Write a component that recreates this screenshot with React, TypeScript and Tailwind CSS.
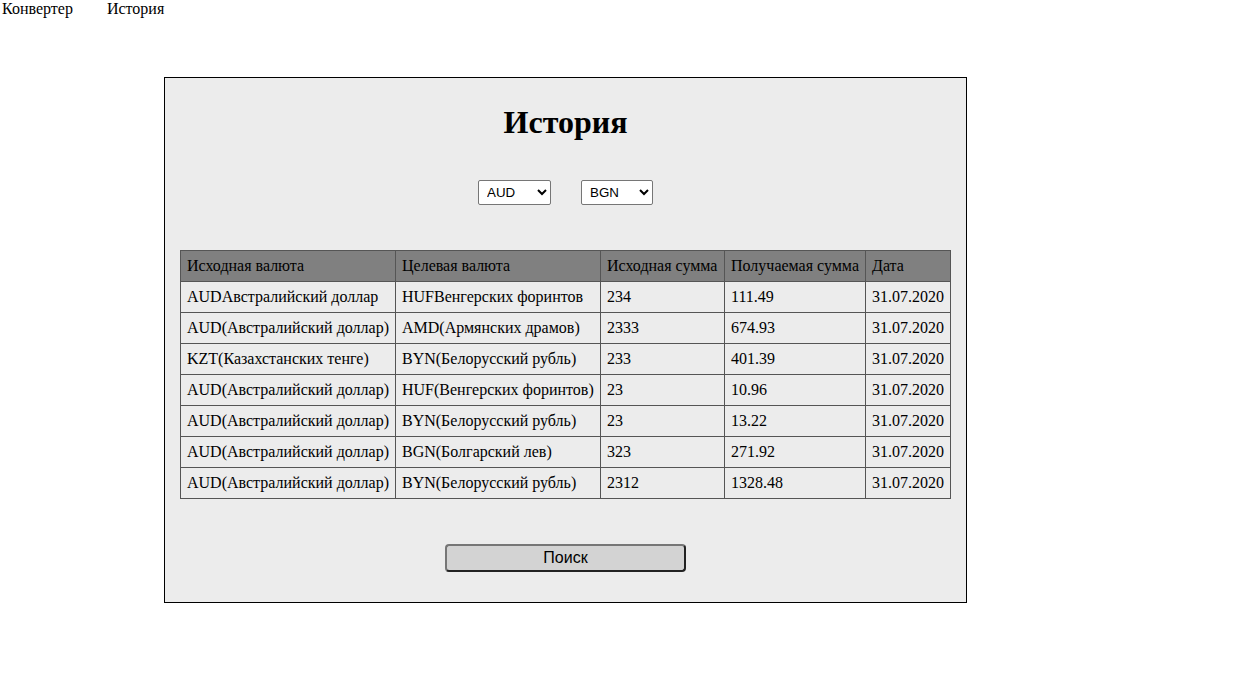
import React from "react";

const rows = [
  ["AUDАвстралийский доллар", "HUFВенгерских форинтов", "234", "111.49", "31.07.2020"],
  ["AUD(Австралийский доллар)", "AMD(Армянских драмов)", "2333", "674.93", "31.07.2020"],
  ["KZT(Казахстанских тенге)", "BYN(Белорусский рубль)", "233", "401.39", "31.07.2020"],
  ["AUD(Австралийский доллар)", "HUF(Венгерских форинтов)", "23", "10.96", "31.07.2020"],
  ["AUD(Австралийский доллар)", "BYN(Белорусский рубль)", "23", "13.22", "31.07.2020"],
  ["AUD(Австралийский доллар)", "BGN(Болгарский лев)", "323", "271.92", "31.07.2020"],
  ["AUD(Австралийский доллар)", "BYN(Белорусский рубль)", "2312", "1328.48", "31.07.2020"],
];

const headers = ["Исходная валюта", "Целевая валюта", "Исходная сумма", "Получаемая сумма", "Дата"];
const widths = ["w-[215px]", "w-[205px]", "w-[124px]", "w-[141px]", "w-[85px]"];

export default function App() {
  return (
    <div className="min-h-[688px] bg-white text-black font-['Liberation_Serif','Times_New_Roman',serif] text-[16px] leading-[18px]">
      <nav className="flex h-[18px] pl-[2px]">
        <span className="mr-[34px]">Конвертер</span>
        <span>История</span>
      </nav>
      <div className="ml-[164px] mt-[59px] w-[803px] h-[526px] border border-black bg-[#ececec] flex flex-col items-center">
        <h1 className="mt-[26px] text-[32px] leading-[37px] font-bold">История</h1>
        <div className="mt-[39px] flex gap-[30px] h-[25px]">
          <select className="w-[73px] h-[25px] border border-[#767676] rounded-[2px] bg-white pl-[4px] font-['Liberation_Sans',Arial,sans-serif] text-[13.33px] text-black">
            <option>AUD</option>
          </select>
          <select className="w-[72px] h-[25px] border border-[#767676] rounded-[2px] bg-white pl-[4px] font-['Liberation_Sans',Arial,sans-serif] text-[13.33px] text-black">
            <option>BGN</option>
          </select>
        </div>
        <table className="mt-[45px] w-[770px] table-fixed border-collapse border border-[#555]">
          <thead>
            <tr className="bg-[#808080]">
              {headers.map((h, i) => (
                <th key={i} className={`${widths[i]} h-[31px] border border-[#555] px-[6px] text-left font-normal whitespace-nowrap`}>
                  {h}
                </th>
              ))}
            </tr>
          </thead>
          <tbody>
            {rows.map((r, ri) => (
              <tr key={ri}>
                {r.map((c, ci) => (
                  <td key={ci} className="h-[31px] border border-[#555] px-[6px] whitespace-nowrap">
                    {c}
                  </td>
                ))}
              </tr>
            ))}
          </tbody>
        </table>
        <button className="mt-[45px] w-[241px] h-[28px] bg-[#d3d3d3] border-2 border-t-[#767676] border-l-[#767676] border-b-[#222] border-r-[#222] rounded-[4px] font-['Liberation_Sans',Arial,sans-serif] text-[16px] text-black">
          Поиск
        </button>
      </div>
    </div>
  );
}
